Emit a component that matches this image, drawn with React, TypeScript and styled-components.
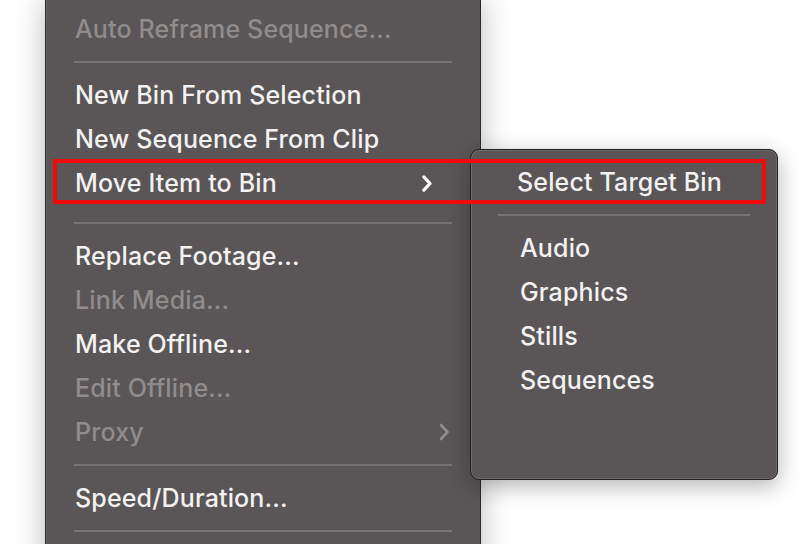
import styled, { createGlobalStyle } from "styled-components";

const GlobalStyle = createGlobalStyle`
  html, body {
    margin: 0;
    padding: 0;
    background: #ffffff;
  }
  body {
    font-family: Inter, "Noto Sans", "Liberation Sans", sans-serif;
    -webkit-font-smoothing: antialiased;
  }
`;

const Stage = styled.div`
  position: relative;
  width: 800px;
  height: 544px;
  overflow: hidden;
  background: #ffffff;
`;

const Menu = styled.div`
  position: relative;
  margin-left: 45px;
  width: 434px;
  height: 580px;
  padding: 7px 0 0;
  box-sizing: content-box;
  background: #5a5657;
  border-left: 1px solid #2b2929;
  border-right: 1px solid #2b2929;
  box-shadow: 0 0 28px rgba(0, 0, 0, 0.28), inset 1px 0 0 #6a6666;
  display: flex;
  flex-direction: column;
`;

const Row = styled.div<{ $disabled?: boolean }>`
  display: flex;
  align-items: center;
  justify-content: space-between;
  height: 44px;
  padding: 0 28px 0 29px;
  font-size: 25px;
  font-weight: 450;
  letter-spacing: 0.15px;
  color: ${(p) => (p.$disabled ? "#908c8c" : "#f3f1f1")};
  white-space: nowrap;
`;

const Separator = styled.div<{ $extra?: number }>`
  height: 22px;
  margin-top: ${(p) => p.$extra ?? 0}px;
  margin-left: 28px;
  margin-right: 28px;
  display: flex;
  align-items: center;

  &::after {
    content: "";
    flex: 1;
    height: 2px;
    background: #777373;
  }
`;

const Chevron = styled.svg<{ $offset: number }>`
  margin-right: ${(p) => p.$offset}px;
  flex-shrink: 0;
`;

const SubMenu = styled.div`
  position: absolute;
  left: 470px;
  top: 149px;
  width: 308px;
  height: 331px;
  border-radius: 9px;
  background: #5a5657;
  border: 1px solid #232121;
  box-shadow: inset 0 0 0 1px #6f6b6b, 0 6px 22px rgba(0, 0, 0, 0.3);
  padding-top: 10px;
  box-sizing: border-box;
  display: flex;
  flex-direction: column;
`;

const SubRow = styled(Row)<{ $indent: number }>`
  padding-left: ${(p) => p.$indent}px;
`;

const SubSeparator = styled(Separator)`
  margin-left: 27px;
  margin-right: 27px;
`;

const Highlight = styled.div`
  position: absolute;
  left: 53px;
  top: 159px;
  width: 713px;
  height: 45px;
  border: 4px solid #f20a0a;
  box-sizing: border-box;
  pointer-events: none;
`;

const ChevronIcon = ({ color, size, offset, weight }: { color: string; size: number; offset: number; weight: number }) => (
  <Chevron $offset={offset} width={size * 0.6} height={size} viewBox="0 0 12 20">
    <path
      d="M3 3 L9.5 10 L3 17"
      fill="none"
      stroke={color}
      strokeWidth={weight}
      strokeLinecap="round"
      strokeLinejoin="round"
    />
  </Chevron>
);

const App = () => {
  return (
    <Stage>
      <GlobalStyle />
      <Menu>
        <Row $disabled>Auto Reframe Sequence...</Row>
        <Separator />
        <Row>New Bin From Selection</Row>
        <Row>New Sequence From Clip</Row>
        <Row>
          Move Item to Bin
          <ChevronIcon color="#ffffff" size={19} offset={20} weight={3.4} />
        </Row>
        <Separator $extra={7} />
        <Row>Replace Footage...</Row>
        <Row $disabled>Link Media...</Row>
        <Row>Make Offline...</Row>
        <Row $disabled>Edit Offline...</Row>
        <Row $disabled>
          Proxy
          <ChevronIcon color="#908c8c" size={20} offset={2} weight={2.6} />
        </Row>
        <Separator />
        <Row>Speed/Duration...</Row>
        <Separator />
      </Menu>
      <SubMenu>
        <SubRow $indent={46}>Select Target Bin</SubRow>
        <SubSeparator />
        <SubRow $indent={49}>Audio</SubRow>
        <SubRow $indent={49}>Graphics</SubRow>
        <SubRow $indent={49}>Stills</SubRow>
        <SubRow $indent={49}>Sequences</SubRow>
      </SubMenu>
      <Highlight />
    </Stage>
  );
};

export default App;
